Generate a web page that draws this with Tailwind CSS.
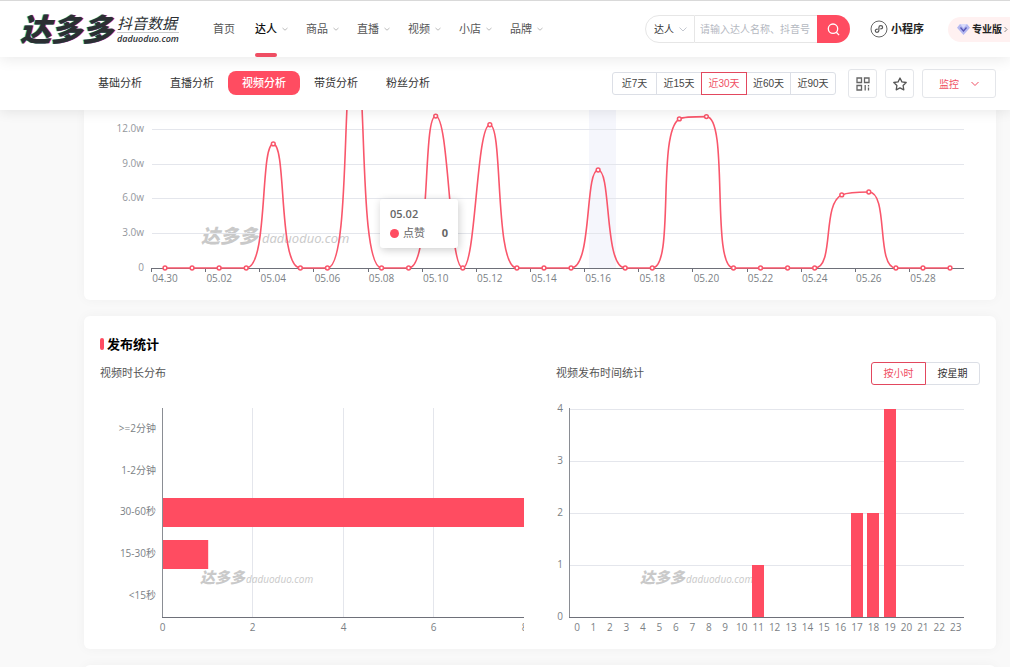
<!DOCTYPE html>
<html lang="zh-CN">

<head>
  <meta charset="UTF-8">
  <meta name="viewport" content="width=device-width, initial-scale=1.0">
  <title>达多多 - 视频分析</title>
  <script src="https://cdn.jsdelivr.net/npm/@tailwindcss/browser@4"></script>
</head>

<body class="h-screen overflow-hidden bg-[#f9f9f9] font-['Open_Sans','Noto_Sans_CJK_SC',sans-serif] text-[11px] leading-4 text-[#555]">

  <!-- header -->
  <header class="relative z-30 flex h-[57px] items-center border-t border-[#d9d9d9] bg-white pl-5 whitespace-nowrap shadow-[0_2px_14px_rgba(0,0,0,0.09)]">
    <a href="#" class="flex w-[161px] items-center gap-1 text-[#2b2f33] italic">
      <span class="text-[31px] leading-8 font-black [text-shadow:-1px_0_0_#3fd9d0,1px_0_0_#e8385c]">达多多</span>
      <span class="flex w-[62px] flex-col">
        <span class="border-b border-[#ccc] text-[15px] leading-[18px]">抖音数据</span>
        <span class="text-[9px] leading-3 font-semibold">daduoduo.com</span>
      </span>
    </a>

    <nav class="ml-8 flex h-full items-center gap-[18px]">
      <a href="#" class="mr-[2px]">首页</a>
      <a href="#" class="relative flex h-full items-center gap-[5px] font-medium text-[#111]">达人
        <svg class="h-[6px] w-[6px]" viewBox="0 0 6 6" fill="none" stroke="#bbb"><path d="M.5 2 3 4.2 5.5 2" /></svg>
        <span class="absolute bottom-0 left-0 h-1 w-[22px] rounded-full bg-[#ef4e63]"></span>
      </a>
      <a href="#" class="flex items-center gap-[5px]">商品
        <svg class="h-[6px] w-[6px]" viewBox="0 0 6 6" fill="none" stroke="#bbb"><path d="M.5 2 3 4.2 5.5 2" /></svg>
      </a>
      <a href="#" class="flex items-center gap-[5px]">直播
        <svg class="h-[6px] w-[6px]" viewBox="0 0 6 6" fill="none" stroke="#bbb"><path d="M.5 2 3 4.2 5.5 2" /></svg>
      </a>
      <a href="#" class="flex items-center gap-[5px]">视频
        <svg class="h-[6px] w-[6px]" viewBox="0 0 6 6" fill="none" stroke="#bbb"><path d="M.5 2 3 4.2 5.5 2" /></svg>
      </a>
      <a href="#" class="flex items-center gap-[5px]">小店
        <svg class="h-[6px] w-[6px]" viewBox="0 0 6 6" fill="none" stroke="#bbb"><path d="M.5 2 3 4.2 5.5 2" /></svg>
      </a>
      <a href="#" class="flex items-center gap-[5px]">品牌
        <svg class="h-[6px] w-[6px]" viewBox="0 0 6 6" fill="none" stroke="#bbb"><path d="M.5 2 3 4.2 5.5 2" /></svg>
      </a>
    </nav>

    <form class="ml-auto flex h-7 w-[205px] items-stretch text-[10px]" onsubmit="return false">
      <div class="relative w-[50px] rounded-l-full border border-[#e6e6e6]">
        <select aria-label="搜索类型" class="h-full w-full appearance-none bg-transparent pl-2 text-[#333] outline-none">
          <option>达人</option>
          <option>商品</option>
        </select>
        <svg class="pointer-events-none absolute top-[10px] right-[7px] h-[7px] w-2" viewBox="0 0 8 7" fill="none" stroke="#c4c8d0"><path d="M.5 1.5 4 5 7.5 1.5" /></svg>
      </div>
      <input type="text" aria-label="搜索" placeholder="请输入达人名称、抖音号" class="w-[122px] border-y border-[#e6e6e6] px-[5px] placeholder:text-[#b4b8bf] focus:outline-none">
      <button type="submit" aria-label="搜索" class="flex w-[33px] items-center justify-center rounded-r-full bg-[#ff4c61]">
        <svg class="h-[13px] w-[13px]" viewBox="0 0 13 13" fill="none" stroke="#fff" stroke-width="1.3"><circle cx="6" cy="5.7" r="4.7" /><path d="m9.3 9.2 2.8 2.9" /></svg>
      </button>
    </form>

    <a href="#" class="ml-5 flex items-center gap-[3px] font-bold text-[#222]">
      <svg class="h-[18px] w-[18px]" viewBox="0 0 18 18" fill="none" stroke="#555"><circle cx="9" cy="9" r="8" stroke-width=".9" /><path d="M7.3 9.2C6 9.200 5.300 9.900 5.300 10.800 5.300 11.700 6 12.300 7 12.300 8.100 12.300 8.900 11.600 8.900 10.600V7.400C8.900 6.400 9.700 5.700 10.800 5.700 11.800 5.700 12.600 6.300 12.600 7.200 12.600 8.100 11.900 8.800 10.700 8.800" stroke-width="1.2" stroke-linecap="round" /></svg>
      小程序
    </a>
    <a href="#" class="ml-6 flex h-[25px] w-[62px] items-center rounded-l-full bg-[#fff1f1] pl-[9px] text-[10px] font-bold text-[#222]">
      <svg class="mr-[2px] h-[11px] w-[13px] shrink-0" viewBox="0 0 13 11"><path d="M3 0h7l3 3.7L6.5 11 0 3.7z" fill="#b4b8f0" /><path d="M3 0h7L6.5 4z" fill="#d9dbfb" /><path d="m3.5 3.5 3 3.5 3-3.5" fill="none" stroke="#5654b4" stroke-width="1.3" /></svg>
      专业版
      <svg class="ml-[2px] h-[7px] w-1 shrink-0" viewBox="0 0 4 7" fill="none" stroke="#888"><path d="M.5 1 3 3.5.5 6" /></svg>
    </a>
  </header>

  <!-- tabs + filter -->
  <div class="relative z-20 flex h-[53px] items-center bg-white pr-[14px] pl-[84px] whitespace-nowrap shadow-[0_2px_12px_rgba(0,0,0,0.09)]">
    <nav class="flex items-center pb-px text-center leading-6 text-[#333]">
      <a href="#" class="w-[72px]">基础分析</a>
      <a href="#" class="w-[72px]">直播分析</a>
      <a href="#" class="w-[72px] rounded-lg bg-[#ff4c61] font-medium text-white">视频分析</a>
      <a href="#" class="w-[72px]">带货分析</a>
      <a href="#" class="w-[72px]">粉丝分析</a>
    </nav>

    <div class="ml-auto flex h-[23px] font-['Liberation_Sans','Noto_Sans_CJK_SC',sans-serif] text-[10px] text-[#444]">
      <button class="w-[45px] rounded-l-[3px] border border-[#dcdfe6]">近7天</button>
      <button class="-ml-px w-[46px] border border-[#dcdfe6]">近15天</button>
      <button class="relative -ml-px w-[46px] border border-[#e2485e] text-[#ef4e63]">近30天</button>
      <button class="-ml-px w-[45px] border border-[#dcdfe6]">近60天</button>
      <button class="-ml-px w-[46px] rounded-r-[3px] border border-[#dcdfe6]">近90天</button>
    </div>

    <button aria-label="二维码" class="ml-3 flex h-[29px] w-[29px] items-center justify-center rounded-[3px] border border-[#e4e6ea]">
      <svg class="h-[14px] w-[14px]" viewBox="0 0 14 14" fill="none" stroke="#666" stroke-width="1.3"><path d="M1 1h4.500v4.500H1zM8.500 1H13v4.500H8.500zM1 8.500h4.500V13H1zM9.200 8v5.600M12.500 8v1.500M12.500 10.600v3" /></svg>
    </button>
    <button aria-label="收藏" class="ml-2 flex h-[29px] w-[29px] items-center justify-center rounded-[3px] border border-[#e4e6ea]">
      <svg class="h-[14px] w-[14px]" viewBox="0 0 14 14" fill="none" stroke="#555" stroke-width="1.3" stroke-linejoin="round"><path d="m7 1 1.900 3.900 4.300.6-3.100 3 .7 4.300L7 10.800l-3.800 2 .7-4.300-3.100-3 4.300-.6z" /></svg>
    </button>
    <button class="ml-2 flex h-[29px] w-[74px] items-center justify-center gap-3 rounded-[3px] border border-[#e4e6ea] text-[10px] text-[#ef4e63]">监控
      <svg class="h-[6px] w-2" viewBox="0 0 8 6" fill="none" stroke="#ef4e63"><path d="M.5 1 4 4.500 7.500 1" /></svg>
    </button>
  </div>

  <main class="flex flex-col gap-4 pr-[14px] pl-[84px]">
    <!-- likes trend -->
    <section class="relative rounded-b-md bg-white shadow-[0_0_12px_rgba(0,0,0,0.04)]">
      <svg id="trend" class="block w-full text-[10px]" viewBox="0 0 912 190"></svg>
      <div class="absolute top-[89px] left-[296px] h-[49px] w-[78px] rounded-[3px] bg-white px-[10px] pt-[6px] text-[#666] shadow-[1px_2px_8px_rgba(0,0,0,0.2)]">
        <p class="leading-[18px] font-semibold">05.02</p>
        <p class="flex items-center leading-5">
          <span class="mr-1 h-[9px] w-[9px] rounded-full bg-[#ff4c61]"></span>
          <span>点赞</span>
          <span class="ml-auto font-bold">0</span>
        </p>
      </div>
    </section>

    <!-- publish stats -->
    <section class="rounded-md bg-white px-4 pt-5 pb-3 shadow-[0_0_12px_rgba(0,0,0,0.04)]">
      <h2 class="flex items-center gap-[3px] text-[13px] font-bold text-black">
        <span class="h-3 w-1 rounded-sm bg-[#ff4c61]"></span>发布统计
      </h2>
      <div class="grid grid-cols-2 gap-8 pt-[9px]">
        <div>
          <div class="flex h-6 items-center">视频时长分布</div>
          <svg id="duration" class="mt-[11px] block w-full text-[10px]" viewBox="0 0 424 241"></svg>
        </div>
        <div>
          <div class="flex h-6 items-center justify-between">
            <span>视频发布时间统计</span>
            <div class="flex h-[23px] text-[10px]">
              <button class="relative w-[55px] rounded-l-[3px] border border-[#e2485e] text-[#ef4e63]">按小时</button>
              <button class="-ml-px w-[55px] rounded-r-[3px] border border-[#dcdfe6] text-[#333]">按星期</button>
            </div>
          </div>
          <svg id="hours" class="mt-[11px] block w-full text-[10px]" viewBox="0 0 424 241"></svg>
        </div>
      </div>
    </section>

    <section class="h-16 rounded-md bg-white shadow-[0_0_12px_rgba(0,0,0,0.04)]"></section>
  </main>

  <script>
    const red = '#ff4c61';
    const line = (x1, y1, x2, y2, color) => `<path d="M${x1} ${y1}L${x2} ${y2}" stroke="${color}" fill="none"/>`;
    const label = (x, y, text, anchor, color = '#7b7f85') => `<text x="${x}" y="${y}" text-anchor="${anchor}" fill="${color}">${text}</text>`;
    const rect = (x, y, w, h, color) => `<rect x="${x}" y="${y}" width="${w}" height="${h}" fill="${color}"/>`;

    function watermark(x, y, big) {
      return `<g fill="#c9c9c9" font-style="italic">
          <text x="${x}" y="${y}" font-size="${big ? 19 : 15}" font-weight="900">达多多</text>
          <text x="${x + (big ? 61 : 46)}" y="${y}" font-size="${big ? 13 : 10}">daduoduo.com</text>
        </g>`;
    }

    const clamp = (v, a, b) => Math.max(Math.min(a, b), Math.min(v, Math.max(a, b)));

    // smooth line through all points, control points never leave the segment box
    function smoothPath(pts) {
      let d = `M${pts[0]}`;
      let cx0 = pts[0][0], cy0 = pts[0][1];
      for (let i = 1; i < pts.length; i++) {
        const [px, py] = pts[i - 1];
        const [x, y] = pts[i];
        let cx1 = x, cy1 = y, nx0 = x, ny0 = y;
        if (i < pts.length - 1) {
          const [nx, ny] = pts[i + 1];
          const prevLen = Math.hypot(x - px, y - py);
          const nextLen = Math.hypot(nx - x, ny - y);
          const ratio = nextLen / (nextLen + prevLen);
          nx0 = clamp(x + (nx - px) * 0.5 * ratio, x, nx);
          ny0 = clamp(y + (ny - py) * 0.5 * ratio, y, ny);
          cx1 = clamp(x - (nx0 - x) * prevLen / nextLen, px, x);
          cy1 = clamp(y - (ny0 - y) * prevLen / nextLen, py, y);
          nx0 = x + (x - cx1) * nextLen / prevLen;
          ny0 = y + (y - cy1) * nextLen / prevLen;
        }
        d += `C${cx0} ${cy0} ${cx1} ${cy1} ${x} ${y}`;
        cx0 = nx0;
        cy0 = ny0;
      }
      return d;
    }

    // likes per day, in 万
    const likes = [0, 0, 0, 0, 10.7, 0, 0, 18.3, 0, 0, 13.1, 0, 12.35, 0, 0, 0, 8.45, 0, 0, 12.85, 13.05, 0, 0, 0, 0, 6.3, 6.55, 0, 0, 0];
    const days = ['04.30', '05.02', '05.04', '05.06', '05.08', '05.10', '05.12', '05.14', '05.16', '05.18', '05.20', '05.22', '05.24', '05.26', '05.28'];
    let svg = rect(505, 0, 27, 158, '#f5f6fc') + watermark(117, 133, true);
    ['0', '3.0w', '6.0w', '9.0w', '12.0w'].forEach((t, i) => {
      const y = 158.5 - Math.round(i * 34.8);
      if (i) svg += line(68, y, 880, y, '#e4e6ec');
      svg += label(60, y + 2, t, 'end', '#94979d');
    });
    svg += line(67, 158.5, 880, 158.5, '#6e7079');
    days.forEach((t, i) => {
      const x = Math.round(67 + i * 54.14) + 0.5;
      svg += line(x, 158, x, 162, '#6e7079') + label(81 + i * 54.14, 172, t, 'middle');
    });
    const pts = likes.map((v, i) => [81 + i * 27.07, 158 - v * 11.6]);
    svg += `<path d="${smoothPath(pts)}" fill="none" stroke="#f9566b" stroke-width="1.6"/>`;
    pts.forEach(p => svg += `<circle cx="${p[0]}" cy="${p[1]}" r="1.9" fill="#fff" stroke="#f9566b" stroke-width="1.5"/>`);
    document.getElementById('trend').innerHTML = svg;

    // video duration
    svg = '';
    [0, 2, 4, 6, 8].forEach((n, i) => {
      const x = 62.5 + Math.round(i * 90.4);
      if (i && i < 4) svg += line(x, 12, x, 221, '#e4e6ec');
      svg += label(x, 235, n, 'middle');
    });
    svg += watermark(100, 187, false);
    [['&gt;=2分钟', 0], ['1-2分钟', 0], ['30-60秒', 8], ['15-30秒', 1], ['&lt;15秒', 0]].forEach(([t, v], i) => {
      const y = 33 + i * 41.7;
      svg += label(56, y + 3, t, 'end');
      if (v) svg += rect(63, Math.round(y - 14), v * 45.2, 29, red);
    });
    svg += line(62.5, 12, 62.5, 221, '#8a8d94') + line(62, 221.5, 424, 221.5, '#6e7079');
    document.getElementById('duration').innerHTML = svg;

    // publish hour
    const hours = { 11: 1, 17: 2, 18: 2, 19: 4 };
    svg = '';
    for (let n = 0; n <= 4; n++) {
      const y = 221.5 - n * 52;
      if (n) svg += line(14, y, 408, y, '#e4e6ec');
      svg += label(7, y + 2, n, 'end');
    }
    svg += watermark(84, 187, false);
    for (let h = 0; h < 24; h++) {
      const x = 21 + h * 16.47;
      svg += label(x, 235, h, 'middle');
      if (hours[h]) svg += rect(Math.round(x - 6), 221 - hours[h] * 52, 12, hours[h] * 52, red);
    }
    svg += line(13.5, 12, 13.5, 221, '#8a8d94') + line(13, 221.5, 408, 221.5, '#6e7079');
    document.getElementById('hours').innerHTML = svg;
  </script>
</body>

</html>
